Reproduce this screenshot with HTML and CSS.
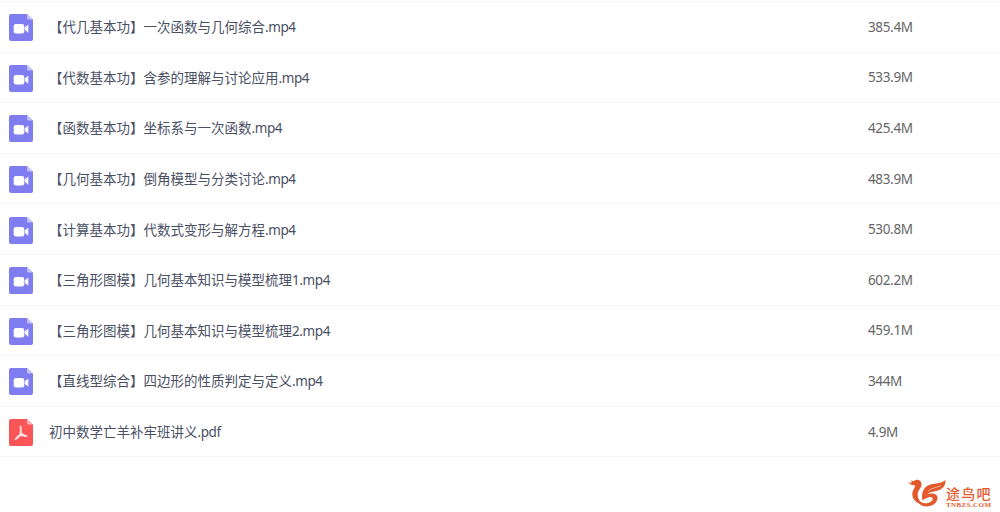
FILE: index.html
```html
<!DOCTYPE html>
<html lang="zh-CN">
<head>
    <meta charset="UTF-8">
    <title>文件列表</title>
    <link rel="stylesheet" href="styles.css">
</head>
<body>
<svg class="defs">
    <symbol id="video" viewBox="0 0 24 27">
        <path fill="#7f7df0" d="M2 0H18l6 5.500v19.500a2 2 0 0 1-2 2H2a2 2 0 0 1-2-2V2A2 2 0 0 1 2 0z"/>
        <path fill="#c5c4fa" d="M18 0l6 5.500h-4.500A1.500 1.500 0 0 1 18 4z"/>
        <rect x="4.700" y="10" width="10.600" height="9.500" rx="2.200" fill="#fff"/>
        <path fill="#fff" d="M15.800 13.500l3.500-3v8.300l-3.500-3z"/>
    </symbol>
    <symbol id="pdf" viewBox="0 0 24 27">
        <path fill="#fb5558" d="M2 0H18l6 5.500v19.500a2 2 0 0 1-2 2H2a2 2 0 0 1-2-2V2A2 2 0 0 1 2 0z"/>
        <path fill="#fdb5b6" d="M18 0l6 5.500h-4.500A1.500 1.500 0 0 1 18 4z"/>
        <path fill="none" stroke="#ffe3e3" stroke-width="1.800" stroke-linecap="round" stroke-linejoin="round" d="M11.500 7.500c.8 3 .5 5-.2 7.500-1 2.500-2.500 4-4.800 5M11.600 13.500c1.200 2.200 3 3.300 5.900 3.700M8.500 17.500c2.500-1.100 4.500-1.500 7-1.200"/>
    </symbol>
</svg>
<div class="list" id="list"></div>
<div class="logo">
    <svg class="bird" viewBox="0 0 38 30">
        <path fill="#e2592c" d="M.5 4.500l3.500.3L3 2.500l3 .8C8 .8 13 1.500 13.500 6c.4 3.500-3.500 6-3.800 10-.3 4.500 2.300 8 6.300 10.500C9 26 4 21.500 4.300 15.500 4.500 12 7 10 7 8 6.500 6.500 3 8 .5 4.500z"/>
        <path fill="#e2592c" d="M37.500 2c.3 6.500-4 10.500-10.500 11.200-3.500.4-6 1.300-8 3.300 3.500-1.500 10-2 10.500 3 .4 5-5 9-11 9-5 0-8.500-3-9.300-7.500 3 4 7.300 5 11 4 3.500-1 5.300-3.500 4.300-5-1.500-2.200-6-.5-10 2.500C12.500 13.500 17 7 24.500 6 30 5.300 34 5 37.500 2z"/>
        <path fill="none" stroke="#fff" stroke-width=".5" d="M20 13c3-3 8-3 13-5.500"/>
    </svg>
    <div class="brand">
        <div class="cn">途鸟吧</div>
        <div class="en">TNBZS.COM</div>
    </div>
</div>
<script src="list.js"></script>
</body>
</html>
```
FILE: styles.css
```css
body{
    margin: 0;
    background: #fff;
    font-family: "Noto Sans", "Noto Sans CJK SC", sans-serif;
    overflow: hidden;
}
.defs{
    display: none;
}
.list{
    margin-top: 1px;
    border-top: 1px solid #f8f8fa;
}
.row{
    display: flex;
    align-items: center;
    box-sizing: border-box;
    height: 50.6px;
    padding-left: 9px;
    border-bottom: 1px solid #f5f6f8;
}
.icon{
    width: 24px;
    height: 27px;
    margin-top: 2px;
    margin-right: 16px;
}
.name{
    width: 819px;
    font-family: "Noto Sans CJK SC", sans-serif;
    font-size: 13.5px;
    line-height: 20px;
    color: #4a5064;
    white-space: nowrap;
}
.ext{
    font-family: "Noto Sans", sans-serif;
    font-size: 13.5px;
    letter-spacing: -0.4px;
}
.size{
    font-size: 13.5px;
    letter-spacing: -0.35px;
    line-height: 20px;
    color: #666;
}
.logo{
    position: absolute;
    left: 908px;
    top: 478px;
    display: flex;
}
.bird{
    width: 38px;
    height: 30px;
}
.brand{
    padding-top: 8px;
    color: #e2592c;
}
.cn{
    font-family: "Noto Sans CJK SC", sans-serif;
    font-size: 14px;
    font-weight: 500;
    letter-spacing: 1.3px;
    line-height: 15px;
}
.en{
    font-family: "Liberation Serif", serif;
    font-size: 7px;
    font-weight: bold;
    letter-spacing: 0.4px;
    line-height: 8px;
}
```
FILE: list.js
```javascript
const files = [
    ["video", "【代几基本功】一次函数与几何综合", ".mp4", "385.4M"],
    ["video", "【代数基本功】含参的理解与讨论应用", ".mp4", "533.9M"],
    ["video", "【函数基本功】坐标系与一次函数", ".mp4", "425.4M"],
    ["video", "【几何基本功】倒角模型与分类讨论", ".mp4", "483.9M"],
    ["video", "【计算基本功】代数式变形与解方程", ".mp4", "530.8M"],
    ["video", "【三角形图模】几何基本知识与模型梳理", "1.mp4", "602.2M"],
    ["video", "【三角形图模】几何基本知识与模型梳理", "2.mp4", "459.1M"],
    ["video", "【直线型综合】四边形的性质判定与定义", ".mp4", "344M"],
    ["pdf", "初中数学亡羊补牢班讲义", ".pdf", "4.9M"]
];

document.getElementById("list").innerHTML = files.map(([icon, name, ext, size]) => `
    <div class="row">
        <svg class="icon"><use href="#${icon}"/></svg>
        <div class="name">${name}<span class="ext">${ext}</span></div>
        <div class="size">${size}</div>
    </div>`).join("");
```
